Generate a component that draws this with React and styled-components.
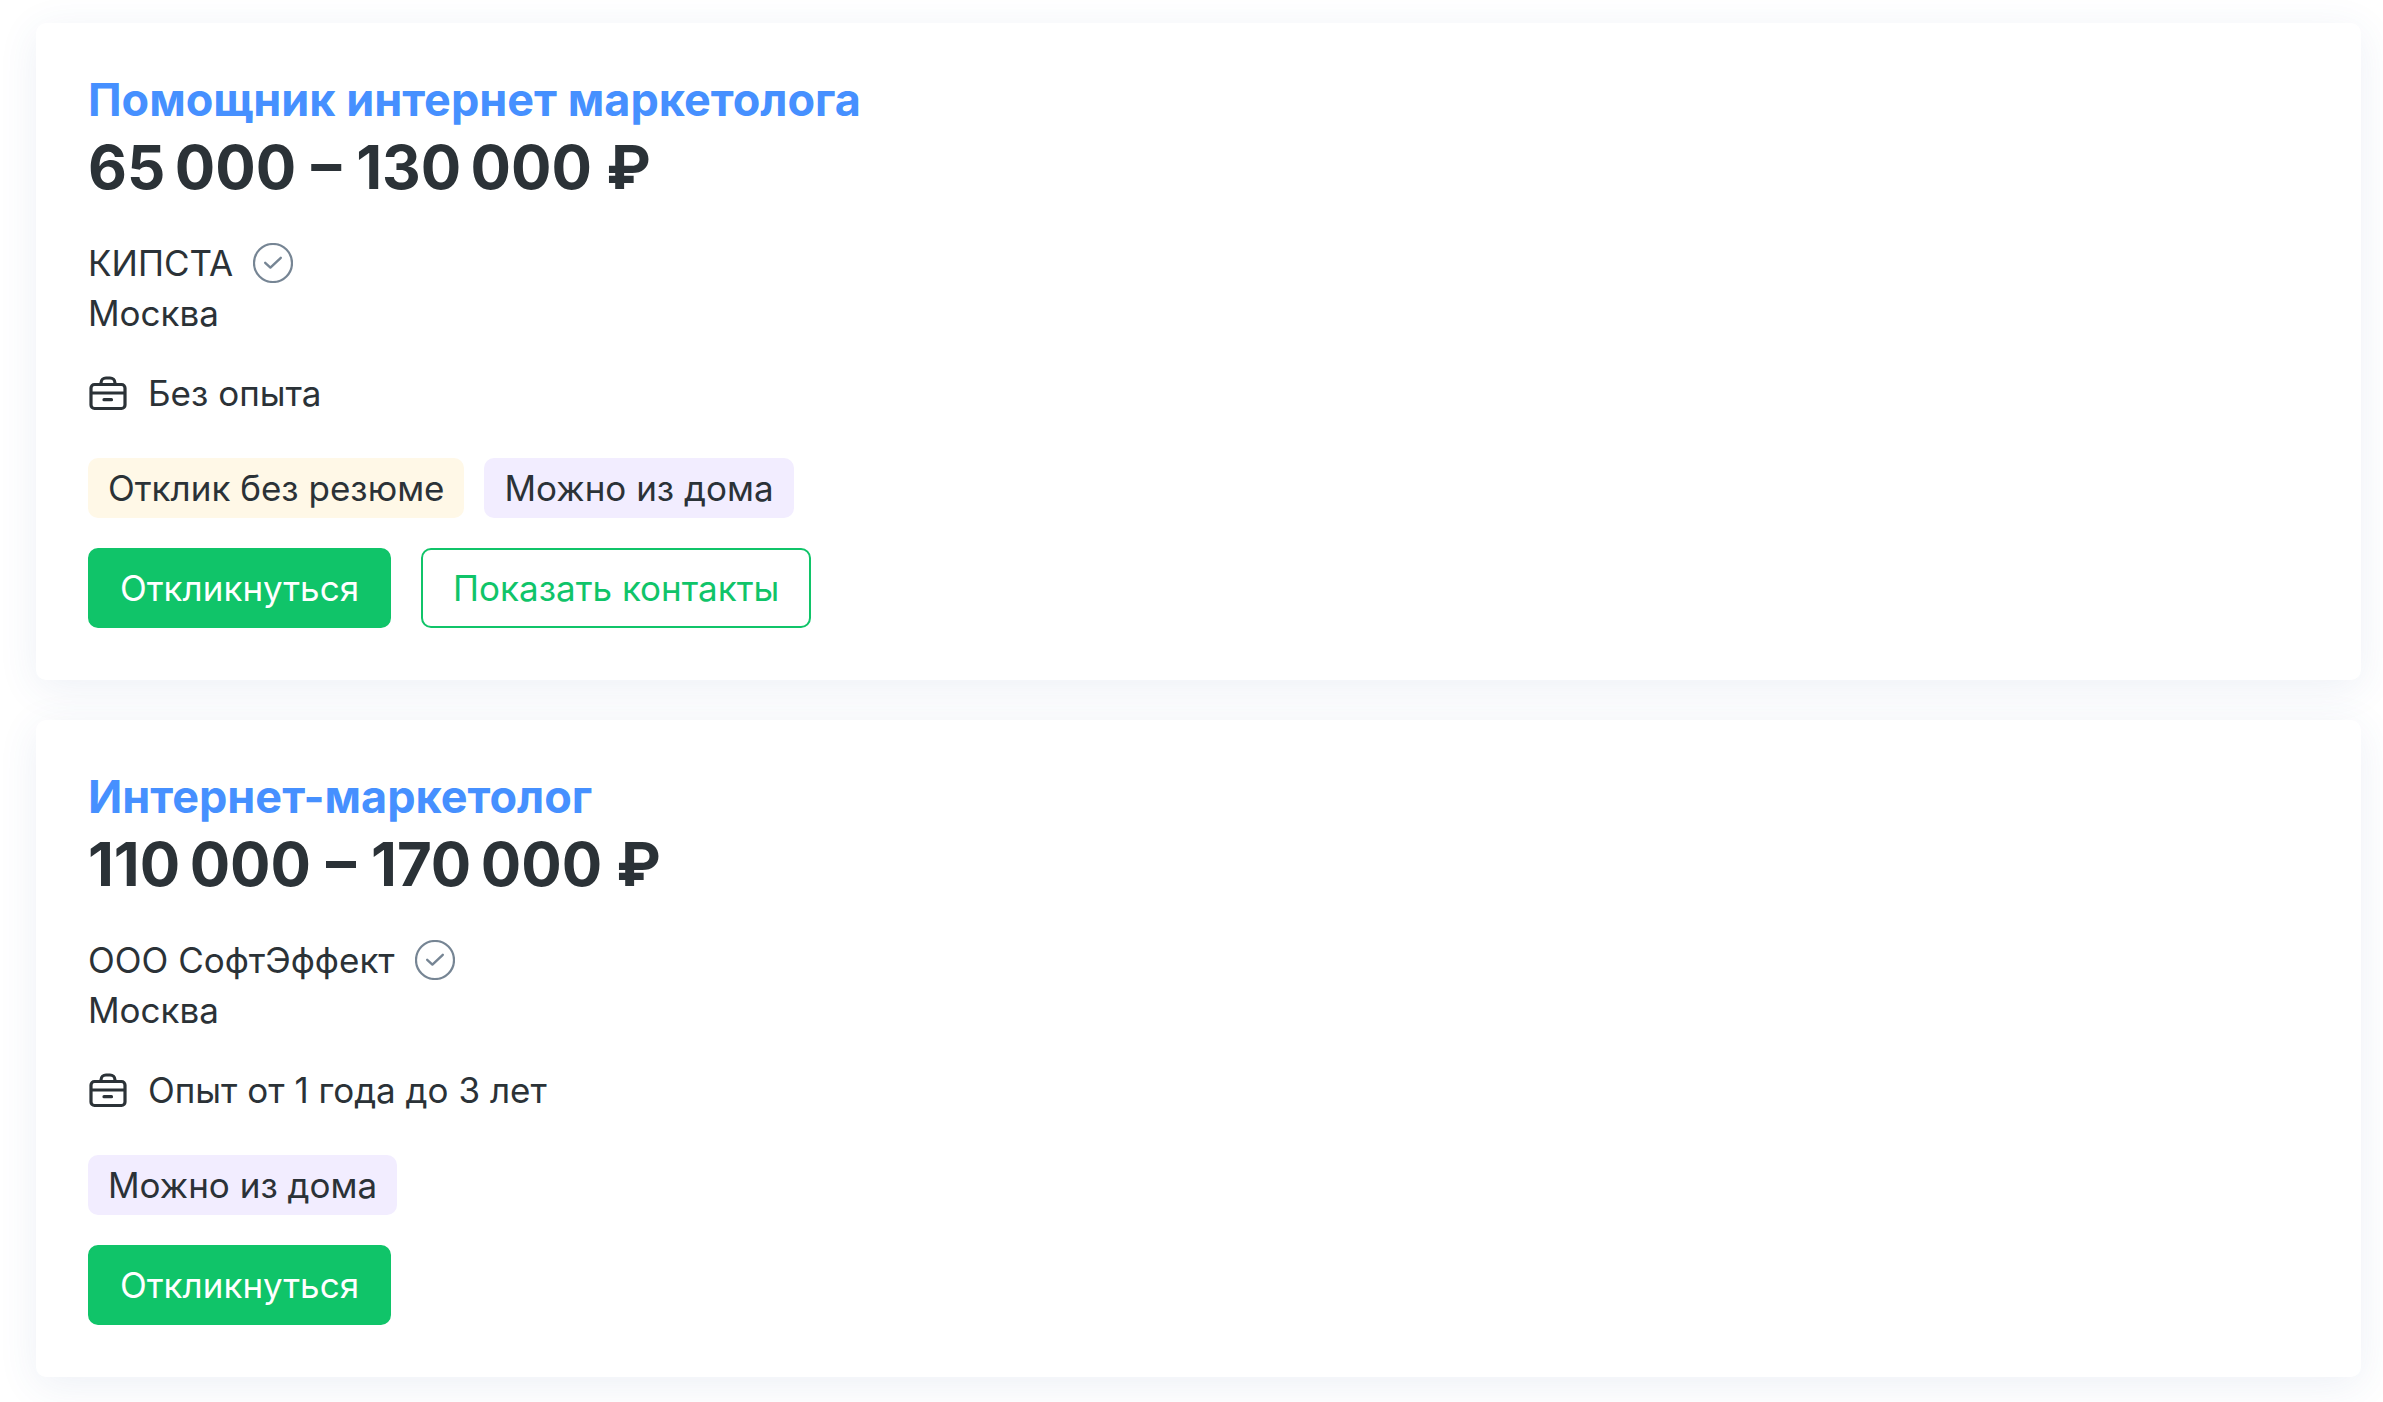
import styled, { createGlobalStyle } from "styled-components";

const GlobalStyle = createGlobalStyle`
  * {
    box-sizing: border-box;
  }

  body {
    margin: 0;
    background-color: #ffffff;
    color: #2b3237;
    font-family: Inter, "Noto Sans", sans-serif;
    font-size: 35px;
    font-weight: 400;
    line-height: 50px;
  }
`;

const List = styled.ul`
  list-style: none;
  margin: 0;
  padding: 23px 22px 25px 36px;
  display: flex;
  flex-direction: column;
  gap: 40px;
`;

const Card = styled.li`
  display: flex;
  flex-direction: column;
  padding: 50px 52px 52px;
  border-radius: 10px;
  background-color: white;
  box-shadow: 0 8px 40px rgba(60, 90, 160, 0.09);
`;

const Title = styled.h2`
  margin: 0;
  font-size: 45px;
  font-weight: 700;
  line-height: 54px;
`;

const TitleLink = styled.a`
  color: #4690ff;
  text-decoration: none;

  &:hover {
    text-decoration: underline;
  }
`;

const Salary = styled.div`
  font-size: 60px;
  font-weight: 700;
  line-height: 81px;
`;

const Company = styled.div`
  display: flex;
  align-items: center;
  gap: 20px;
  margin-top: 30px;
`;

const Experience = styled.div`
  display: flex;
  align-items: center;
  gap: 20px;
  margin-top: 30px;
`;

const Icon = styled.svg`
  width: 40px;
  height: 40px;
  flex-shrink: 0;
  fill: none;
  stroke: ${(props) => props.$color};
  stroke-linecap: round;
  stroke-linejoin: round;
`;

const Tags = styled.div`
  display: flex;
  flex-wrap: wrap;
  gap: 20px;
  margin-top: 40px;
`;

const Tag = styled.span`
  padding: 5px 20px;
  border-radius: 10px;
  background-color: ${(props) => (props.$type === "remote" ? "#f2edff" : "#fff8e7")};
`;

const Actions = styled.div`
  display: flex;
  flex-wrap: wrap;
  gap: 30px;
  margin-top: 30px;
`;

const Button = styled.button`
  height: 80px;
  padding: 0 30px;
  border: 2px solid #10c469;
  border-radius: 10px;
  background-color: ${(props) => (props.$outline ? "white" : "#10c469")};
  color: ${(props) => (props.$outline ? "#10c469" : "white")};
  font: inherit;
  cursor: pointer;
`;

const vacancies = [
  {
    id: 1,
    title: "Помощник интернет маркетолога",
    salary: "65\u2009000\u2005–\u2005130\u2009000\u00a0₽",
    company: "КИПСТА",
    city: "Москва",
    experience: "Без опыта",
    tags: [
      { type: "noResume", label: "Отклик без резюме" },
      { type: "remote", label: "Можно из дома" },
    ],
    contacts: true,
  },
  {
    id: 2,
    title: "Интернет-маркетолог",
    salary: "110\u2009000\u2005–\u2005170\u2009000\u00a0₽",
    company: "ООО СофтЭффект",
    city: "Москва",
    experience: "Опыт от 1 года до 3 лет",
    tags: [{ type: "remote", label: "Можно из дома" }],
    contacts: false,
  },
];

const CheckIcon = () => (
  <Icon viewBox="0 0 40 40" $color="#768594" aria-hidden="true">
    <circle cx="20" cy="20" r="19" strokeWidth="2.2" />
    <path d="M12.2 19.8 17.4 24.6 27.8 14.8" strokeWidth="2.4" />
  </Icon>
);

const BriefcaseIcon = () => (
  <Icon viewBox="0 0 40 40" $color="#2b3237" aria-hidden="true">
    <rect x="3" y="11.5" width="34" height="24" rx="3.5" strokeWidth="3.2" />
    <path d="M13 11v-1a5 5 0 0 1 5-5h4a5 5 0 0 1 5 5v1M3.5 20h33M16 26.7h7.5" strokeWidth="3.2" />
  </Icon>
);

const VacancyCard = ({ vacancy }) => (
  <Card>
    <Title>
      <TitleLink href="#">{vacancy.title}</TitleLink>
    </Title>
    <Salary>{vacancy.salary}</Salary>
    <Company>
      <span>{vacancy.company}</span>
      <CheckIcon />
    </Company>
    <div>{vacancy.city}</div>
    <Experience>
      <BriefcaseIcon />
      <span>{vacancy.experience}</span>
    </Experience>
    <Tags>
      {vacancy.tags.map((tag) => (
        <Tag key={tag.type} $type={tag.type}>{tag.label}</Tag>
      ))}
    </Tags>
    <Actions>
      <Button type="button">Откликнуться</Button>
      {vacancy.contacts && <Button type="button" $outline>Показать контакты</Button>}
    </Actions>
  </Card>
);

const App = () => {
  return (
    <>
      <GlobalStyle />
      <List>
        {vacancies.map((v) => (
          <VacancyCard key={v.id} vacancy={v} />
        ))}
      </List>
    </>
  );
};

export default App;
